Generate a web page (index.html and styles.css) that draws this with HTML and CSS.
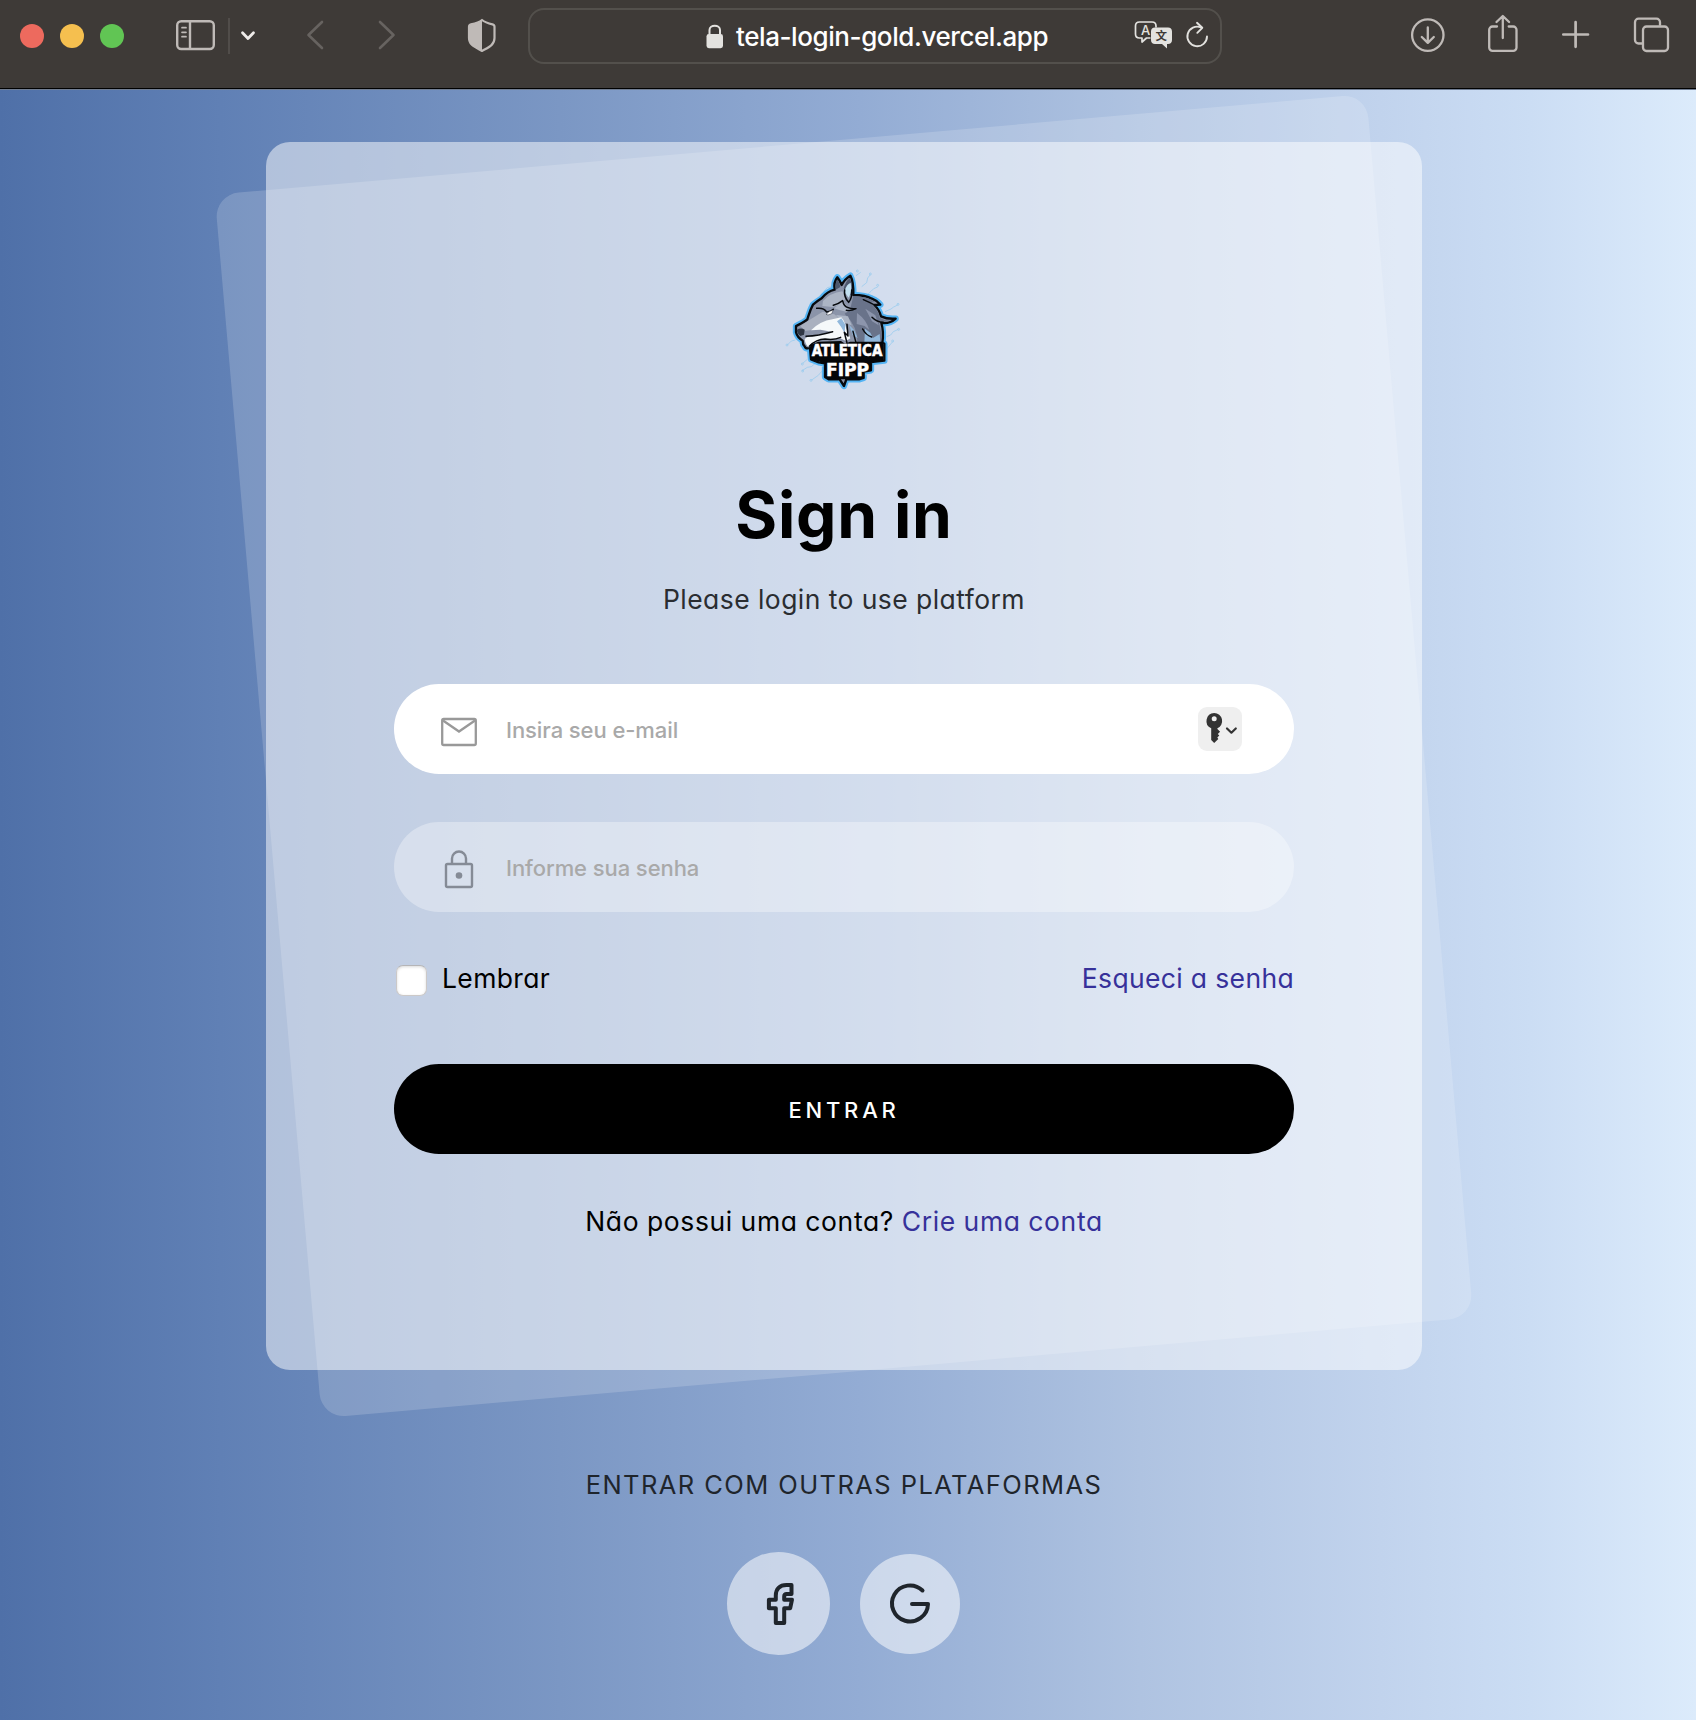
FILE: index.html
```html
<!DOCTYPE html>
<html lang="pt-BR">
<head>
<meta charset="utf-8">
<title>Sign in</title>
<link rel="stylesheet" href="styles.css">
</head>
<body>
<header class="toolbar">
  <div class="lights"><i class="light red"></i><i class="light yellow"></i><i class="light green"></i></div>
  <svg class="sidebar" width="40" height="70" viewBox="176 0 40 70" fill="none" stroke="#bfbab7" stroke-width="2.4"><rect x="177.200" y="21.200" width="36.600" height="27.800" rx="4"/><path d="M190 21v28"/><path d="M182 27.700h4M182 32.300h4M182 36.700h4" stroke-width="1.700" stroke-linecap="round"/></svg>
  <span class="divider"></span>
  <svg class="chevron" width="16" height="70" viewBox="240 0 16 70" fill="none" stroke="#eeebe9" stroke-width="2.800" stroke-linecap="round" stroke-linejoin="round"><path d="M242.500 32.800l5.500 5.700 5.500-5.700"/></svg>
  <svg class="back" width="18" height="70" viewBox="306 0 18 70" fill="none" stroke="#676360" stroke-width="2.600" stroke-linecap="round" stroke-linejoin="round"><path d="M322 22l-13.500 13L322 48"/></svg>
  <svg class="forward" width="18" height="70" viewBox="378 0 18 70" fill="none" stroke="#676360" stroke-width="2.600" stroke-linecap="round" stroke-linejoin="round"><path d="M380 22l13.500 13L380 48"/></svg>
  <svg class="shield" width="30" height="70" viewBox="467 0 30 70"><path d="M482 20c-3 2.500-8 3.700-11 4.400-1.300.3-2 1.200-2 2.400V38c0 7 6 9 13 13 7-4 12.500-6 12.500-13V26.800c0-1.200-.7-2.100-2-2.400-3-.7-7.500-1.900-10.500-4.400z" fill="none" stroke="#bfbab7" stroke-width="2.200" stroke-linejoin="round"/><path d="M482 20c-3 2.500-8 3.700-11 4.400-1.300.3-2 1.200-2 2.400V38c0 7 6 9 13 13z" fill="#bfbab7"/></svg>
  <div class="address">
    <svg class="padlock" width="18" height="54" viewBox="706 9 18 54"><rect x="706.500" y="34" width="16.500" height="14.200" rx="2.400" fill="#e3e2df"/><path d="M709.500 34.500V30c0-5.600 10.500-5.600 10.500 0v4.500" fill="none" stroke="#e3e2df" stroke-width="2"/></svg>
    <span class="url">tela-login-gold.vercel.app</span>
    <svg class="translate" width="40" height="54" viewBox="1134 9 40 54"><path d="M1150.500 38h-4l-4.500 4v-4h-2.500c-2.400 0-4-1.400-4-4v-8c0-2.600 1.600-4 4-4h12.500c2.400 0 4 1.400 4 4v1.500" fill="none" stroke="#e3e2df" stroke-width="1.700" stroke-linejoin="round"/><text x="1141" y="34.500" class="glyph" font-size="13">A</text><path d="M1155 27.500h13c2.500 0 4 1.500 4 4v8.500c0 2.500-1.500 4-4 4h-1v4.500l-5-4.500h-7c-2.500 0-4-1.500-4-4v-8.500c0-2.500 1.500-4 4-4z" fill="#e3e2df"/><text x="1155.500" y="40" class="glyph dark" font-size="11.500">文</text></svg>
    <svg class="reload" width="24" height="54" viewBox="1185 9 24 54" fill="none" stroke="#e3e2df" stroke-width="1.900" stroke-linecap="round" stroke-linejoin="round"><path d="M1207 36.500a9.800 9.800 0 1 1-6-9.100"/><path d="M1197 22.800l5.300 5-5 5"/></svg>
  </div>
  <svg class="download" width="36" height="70" viewBox="1410 0 36 70" fill="none" stroke="#bfbab7" stroke-width="2.300" stroke-linecap="round" stroke-linejoin="round"><circle cx="1427.800" cy="35.100" r="15.700"/><path d="M1427.800 27.500v14.800M1421.800 37l6 5.900 6-5.900"/></svg>
  <svg class="share" width="32" height="70" viewBox="1487 0 32 70" fill="none" stroke="#bfbab7" stroke-width="2.300" stroke-linecap="round" stroke-linejoin="round"><path d="M1497 26.500h-4.500a3.300 3.300 0 0 0-3.300 3.300v17.700a3.300 3.300 0 0 0 3.300 3.300h20.700a3.300 3.300 0 0 0 3.300-3.300V29.800a3.300 3.300 0 0 0-3.300-3.300h-4.500M1502.800 38V16.200M1496.500 22l6.300-6 6.300 6"/></svg>
  <svg class="plus" width="30" height="70" viewBox="1561 0 30 70" stroke="#bfbab7" stroke-width="2.700" stroke-linecap="round"><path d="M1563.300 34.500h24.700M1575.600 22.200v24.600"/></svg>
  <svg class="tabs" width="38" height="70" viewBox="1633 0 38 70" fill="none" stroke="#bfbab7" stroke-width="2.300"><rect x="1643" y="26.500" width="25" height="24.500" rx="3.500"/><path d="M1642 43.500h-3.500a3.500 3.500 0 0 1-3.500-3.500V22.200a3.500 3.500 0 0 1 3.500-3.500h18a3.500 3.500 0 0 1 3.500 3.500v3.500"/></svg>
</header>
<main class="page">
  <section class="card-wrap">
    <form class="card">
      <svg class="logo" width="150" height="150" viewBox="0 0 450 450">
        <g fill="none" stroke="#8fc8ee" stroke-width="2"><path d="M160 110l12-12 12-3 6-10M258 62l14-10M275 95l15-12 3-14 8-10M285 125l18-16 8-8 12-5M345 170l18-8 8-6 12-6M350 245l12-5 8-10 15-7M350 282l18-22M52 270l12-12 12-3M98 325l14-12M96 347l16-10 12-2 12-10M125 375l20-14 10-12"/><circle cx="262" cy="48" r="3"/><circle cx="301" cy="57" r="3"/><circle cx="323" cy="91" r="3"/><circle cx="384" cy="148" r="3"/><circle cx="386" cy="223" r="3"/><circle cx="368" cy="258" r="3"/><circle cx="51" cy="270" r="3"/><circle cx="97" cy="327" r="3"/><circle cx="98" cy="348" r="3"/><circle cx="123" cy="376" r="3"/></g>
        <path d="M78 213C92 206 104 201 112 193C117 178 120 165 129 149Q142 138 155 130Q172 109 194 104Q190 82 202 67Q210 77 215 90Q224 72 241 62Q251 80 250 120Q287 121 306 131Q322 137 331 149L313 150Q328 164 333 184Q352 193 377 191Q360 207 334 204Q342 230 337 264L343 266V317L303 321V346L281 350V369L267 373H229L222 393L209 373H176L165 366V325L146 322L123 313L120 279Q107 283 104 274Q98 269 98 257Q82 248 78 232Z" fill="none" stroke="#54b4f4" stroke-width="19" stroke-linejoin="round"/>
        <path d="M78 213C92 206 104 201 112 193C117 178 120 165 129 149Q142 138 155 130Q172 109 194 104Q190 82 202 67Q210 77 215 90Q224 72 241 62Q251 80 250 120Q287 121 306 131Q322 137 331 149L313 150Q328 164 333 184Q352 193 377 191Q360 207 334 204Q342 230 337 264L343 266V317L303 321V346L281 350V369L267 373H229L222 393L209 373H176L165 366V325L146 322L123 313L120 279Q107 283 104 274Q98 269 98 257Q82 248 78 232Z" fill="#8b94a9" stroke="#070a0e" stroke-width="7" stroke-linejoin="round"/>
        <path d="M250 123Q289 123 316 141L300 143Q326 164 329 188Q347 199 366 196Q346 204 324 197Q338 231 333 262H262Q264 216 224 176L240 166Z" fill="#69738a"/>
        <path d="M197 104Q195 85 202 73Q209 83 211 96ZM221 102Q226 79 240 68Q249 94 244 122Z" fill="#4d586d"/>
        <path d="M223 110Q229 88 242 83Q247 109 236 128Z" fill="#c2e0ef"/>
        <path d="M159 138Q180 114 217 109L229 128Q211 151 187 156L157 153ZM192 160L219 139L232 155L254 162L230 170L210 166ZM198 180L234 184L245 211L225 204L209 193Z" fill="#acb5c5"/>
        <path d="M91 213L123 192L158 170L193 178L207 190L170 204L126 225L105 228Z" fill="#a9b0bf"/>
        <path d="M104 252Q112 245 120 242Q153 240 184 230L151 224L123 226Q151 198 187 193L214 187Q226 201 229 221L241 250L228 258L211 250L186 252L151 253L117 277Q106 271 104 252Z" fill="#f5f8fa"/>
        <path d="M201 199L214 190L226 209L224 234L213 215ZM237 209L252 225L263 249L248 240ZM285 221L301 233L309 249L329 237L331 265H283Z" fill="#91b8dc"/>
        <path d="M261 174Q289 194 298 225L284 213L260 207ZM286 161L316 181L326 211L306 199Z" fill="#8c95ac"/>
        <path d="M80 225Q92 217 104 224L102 239L91 243Q83 239 80 225Z" fill="#303744"/>
        <g fill="none" stroke="#070a0e" stroke-width="4.500" stroke-linecap="round" stroke-linejoin="round"><path d="M140 160Q161 157 170 171Q183 170 190 163M108 244Q145 242 188 230M118 274Q139 252 165 252Q193 256 212 247M190 151Q207 146 218 137Q221 155 235 158Q245 163 258 161Q242 169 229 166M224 105Q221 126 236 142Q247 129 245 105M231 208L234 243L223 232L231 264M249 229L258 263M278 222Q287 240 305 246M280 134Q298 142 310 148M306 187Q321 202 340 202"/></g>
        <path d="M168 178Q177 167 190 165L185 176L174 180Z" fill="#fff" stroke="#222936" stroke-width="1.500"/>
        <path d="M120 270L145 260L213 258L225 266L240 260H340V317L303 321V346L281 350V369L267 373H176L165 366V325L123 313Z" fill="#050608"/>
        <text class="logo-text" x="125" y="304" font-size="47" textLength="212" lengthAdjust="spacingAndGlyphs">ATLETICA</text>
        <text class="logo-text" x="168" y="364" font-size="52" textLength="129" lengthAdjust="spacingAndGlyphs">FIPP</text>
      </svg>
      <h1 class="title">Sign in</h1>
      <p class="subtitle">Please login to use platform</p>
      <label class="field active">
        <svg width="38" height="40" viewBox="440 711 38 40" fill="none" stroke="#999" stroke-width="2.300"><rect x="442.200" y="719" width="33.600" height="26" rx="1.500"/><path d="M443 720.500l16 11 16-11"/></svg>
        <input type="email" placeholder="Insira seu e-mail">
        <span class="keychain"><svg width="44" height="44" viewBox="1198 707 44 44"><path d="M1214.200 713a8 8 0 0 1 3.200 15.300v.7l2.700 2.700-2.300 2.300 1.500 1.500-2 2 1 1.500-4.100 4-3-3V728.300a8 8 0 0 1 3-15.300zm0 3.300a2.500 2.500 0 1 0 0 5 2.500 2.500 0 0 0 0-5z" fill="#333" fill-rule="evenodd"/><path d="M1227 728.500l4.400 4.200 4.400-4.200" fill="none" stroke="#333" stroke-width="2.200" stroke-linecap="round" stroke-linejoin="round"/></svg></span>
      </label>
      <label class="field">
        <svg width="38" height="40" viewBox="440 849 38 40" fill="none" stroke="#858b96" stroke-width="2.400"><rect x="446" y="864" width="26" height="23" rx="1.500"/><path d="M452 864v-5.500a7 7 0 0 1 14 0v5.500"/><circle cx="459" cy="875.500" r="3.300" fill="#858b96" stroke="none"/></svg>
        <input type="password" placeholder="Informe sua senha">
      </label>
      <div class="options">
        <label class="remember"><input type="checkbox"><span>Lembrar</span></label>
        <a class="link forgot">Esqueci a senha</a>
      </div>
      <button type="button" class="submit">ENTRAR</button>
      <p class="signup"><span class="ask">Não possui uma conta?</span> <a class="link">Crie uma conta</a></p>
    </form>
  </section>
  <p class="others">ENTRAR COM OUTRAS PLATAFORMAS</p>
  <div class="social">
    <a class="round facebook"><svg width="48" height="48" viewBox="754 1580 48 48" fill="none" stroke="#1f252c" stroke-width="4" stroke-linejoin="round"><path d="M790.500 1585h-5c-7 0-10.700 4-10.700 10.500v4.200h-6.900v8.500h6.900v14.800h8.400v-14.800h6l1.800-8.500h-7.800v-3.200c0-1.700.8-2.500 2.500-2.500h4.800z"/></svg></a>
    <a class="round google"><svg width="48" height="48" viewBox="886 1580 48 48" fill="none" stroke="#1f252c" stroke-width="4" stroke-linecap="round" stroke-linejoin="round"><path d="M922.500 1590.500a18 18 0 1 0 5.500 13.500h-16"/></svg></a>
  </div>
</main>
</body>
</html>
```
FILE: styles.css
```css
* { box-sizing: border-box; }
body { margin: 0; width: 1696px; height: 1720px; overflow: hidden; font-family: Inter, "Noto Sans CJK SC", sans-serif; color: #000; display: flex; flex-direction: column; }
svg { display: block; flex: none; }
p, h1 { margin: 0; }

.toolbar { height: 90px; flex: none; background: #3e3a37; border-bottom: 1px solid #707d92; box-shadow: inset 0 -1px #000; display: flex; align-items: flex-start; padding-left: 20px; }
.lights { display: flex; gap: 16px; padding-top: 24px; }
.light { width: 24px; height: 24px; border-radius: 50%; }
.red { background: #ed6a5e; }
.yellow { background: #f5bf4f; }
.green { background: #61c554; }
.sidebar { margin-left: 52px; }
.divider { width: 2px; height: 36px; margin: 18px 0 0 12px; background: #514d4a; }
.chevron { margin-left: 10px; }
.back { margin-left: 50px; }
.forward { margin-left: 54px; }
.shield { margin-left: 71px; }
.address { width: 694px; height: 56px; margin: 8px 0 0 31px; border: 2px solid #53504c; border-radius: 16px; display: flex; padding-left: 176px; }
.address svg { margin-top: -1px; }
.url { width: 390px; margin-left: 12px; line-height: 53px; font-size: 26px; font-weight: 450; letter-spacing: -0.42px; color: #fff; white-space: nowrap; }
.translate { margin-left: 8px; }
.reload { margin-left: 11px; }
.glyph { fill: #e3e2df; font-family: Inter, "Noto Sans CJK SC", sans-serif; font-weight: 500; }
.glyph.dark { fill: #3e3a37; font-weight: 700; }
.download { margin-left: 188px; }
.share { margin-left: 41px; }
.plus { margin-left: 42px; }
.tabs { margin-left: 42px; }

.page { flex: 1; display: flex; flex-direction: column; align-items: center; padding: 52px 8px 0 0; background: linear-gradient(90deg, #4f70a8 0, #6080b5 220px, #7b97c4 560px, #93acd4 860px, #afc3e1 1140px, #c1d3ed 1380px, #cbddf4 1530px, #dcebfb 1696px); }
.card-wrap { position: relative; width: 1156px; height: 1228px; flex: none; }
.card-wrap::before { content: ""; position: absolute; inset: 0; border-radius: 24px; background: rgba(255, 255, 255, 0.17); transform: rotate(-5deg); }
.card { position: relative; height: 100%; border-radius: 24px; background: rgba(255, 255, 255, 0.5); padding: 113px 128px 0; display: flex; flex-direction: column; }
.logo { align-self: center; margin-left: 2px; }
.logo-text { font-family: "DejaVu Sans Condensed", "DejaVu Sans", sans-serif; font-weight: 700; fill: #fff; stroke: #fff; stroke-width: 1.5; }

.title, .subtitle, .options, .signup, .others { font-feature-settings: "cv11"; white-space: nowrap; }
.title { height: 80px; margin-top: 70px; text-align: center; font-size: 64px; line-height: 80px; font-weight: 650; letter-spacing: 0.8px; }
.subtitle { height: 40px; margin-top: 24px; text-align: center; font-size: 26.5px; line-height: 40px; letter-spacing: 0.44px; color: #2a2d31; }
.field { height: 90px; flex: none; margin-top: 48px; border-radius: 45px; background: rgba(255, 255, 255, 0.33); display: flex; align-items: center; padding: 4px 52px 0 46px; }
.field.active { margin-top: 65px; background: #fff; }
.field input { flex: 1; min-width: 0; height: 50px; margin-left: 28px; padding: 0 0 3px; border: 0; outline: 0; background: none; font: 450 22px Inter, sans-serif; letter-spacing: -0.08px; }
.field input::placeholder { color: #a9a9a9; opacity: 1; }
.keychain { margin-top: -4px; border-radius: 9px; background: #efefef; }
.options { height: 40px; margin-top: 46px; display: flex; justify-content: space-between; align-items: center; font-size: 26.5px; letter-spacing: 0.35px; }
.remember { display: flex; align-items: center; padding-left: 2px; }
.remember input { appearance: none; width: 31px; height: 31px; margin: 4px 15px 0 0; border: 1px solid #ccc9c8; border-top-color: #b5b5b7; border-radius: 7px; background: #fff; box-shadow: inset 0 1px 3px rgba(0, 0, 0, 0.15); }
.link { color: #36319a; }
.submit { height: 90px; flex: none; margin-top: 66px; border: 0; border-radius: 45px; background: #000; color: #fff; font: 500 22px Inter, sans-serif; letter-spacing: 3.8px; padding: 2px 0 0; }
.signup { height: 40px; margin-top: 47px; text-align: center; font-size: 26.5px; line-height: 40px; letter-spacing: 0.62px; word-spacing: -0.3px; }
.others { height: 40px; margin-top: 95px; font-size: 25.5px; line-height: 40px; letter-spacing: 1.42px; color: #1f252c; }
.social { display: flex; align-items: center; gap: 30px; margin: 47px 1px 0 0; }
.round { width: 100px; height: 100px; border-radius: 50%; background: rgba(255, 255, 255, 0.53); display: flex; align-items: center; justify-content: center; }
.facebook { width: 103px; height: 103px; }
```
